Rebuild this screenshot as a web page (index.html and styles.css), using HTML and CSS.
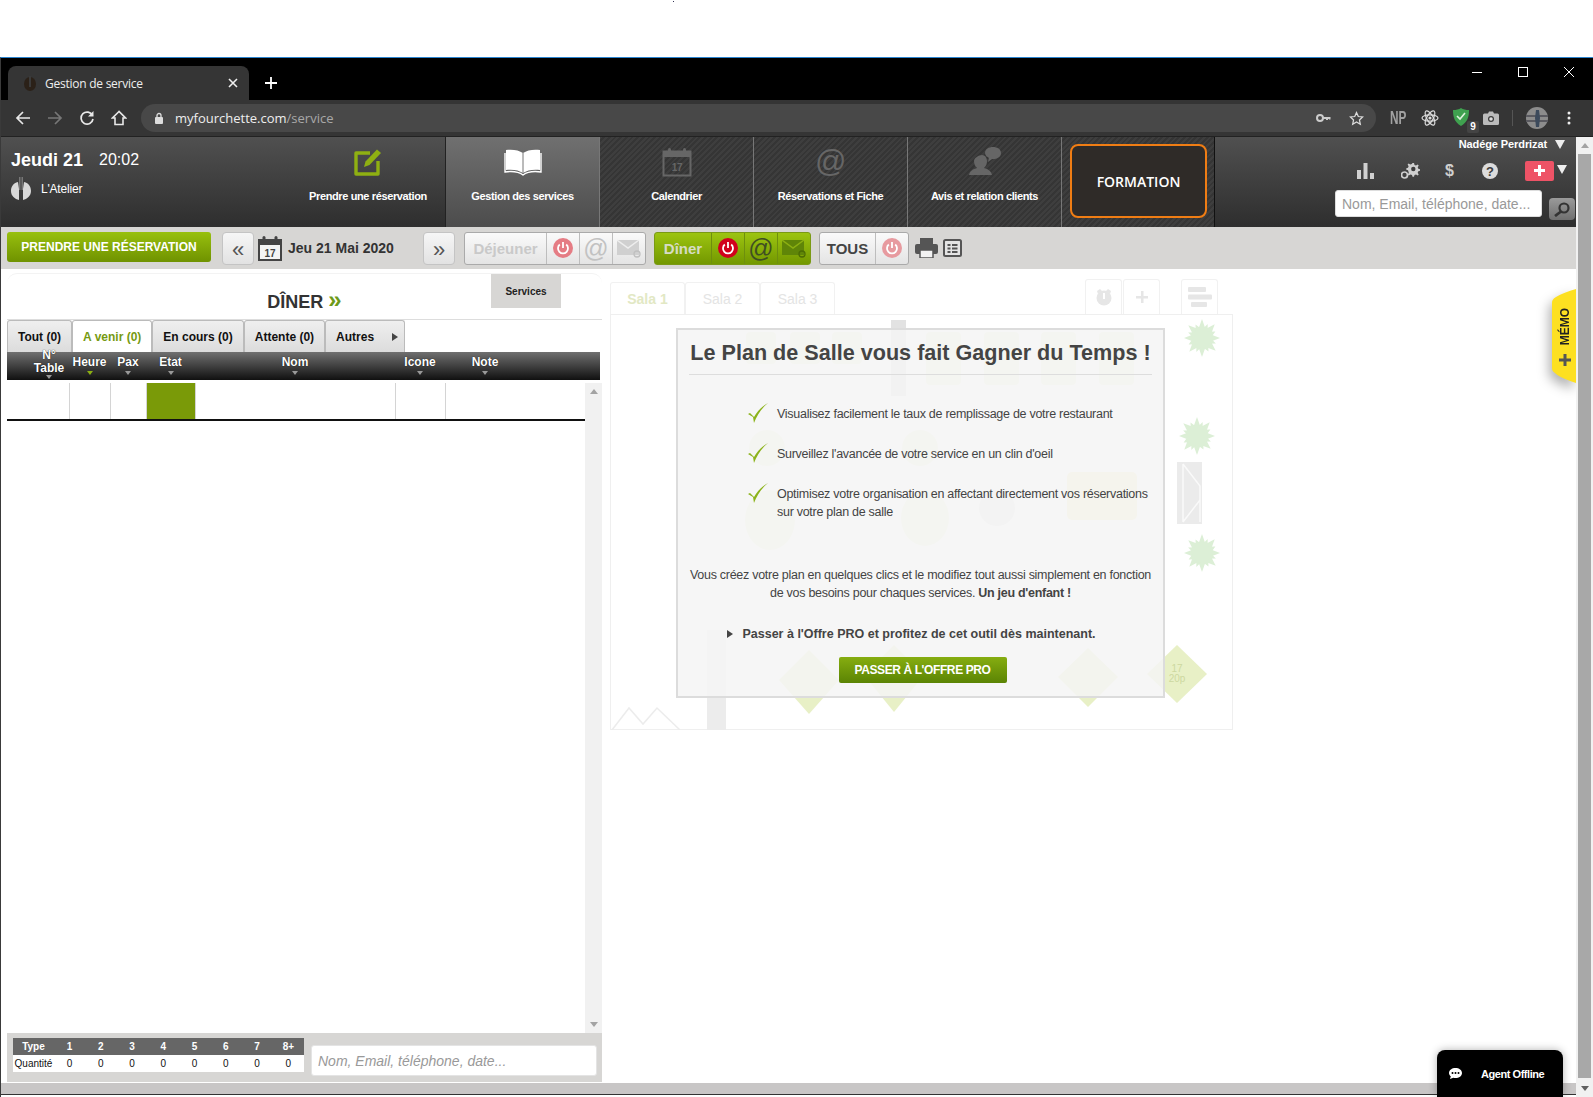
FILE: index.html
```html
<!DOCTYPE html>
<html>
<head>
  <meta charset="utf-8">
  <title>Gestion de service</title>
  <link rel="stylesheet" href="styles.css">
</head>
<body>
  <div class="top-gap"><span class="top-dot"></span></div>
  <div class="window">

    <div class="tabstrip">
      <div class="tab">
        <svg class="tab-favicon" width="16" height="16" viewBox="0 0 16 16"><ellipse cx="8" cy="9" rx="6" ry="7" fill="#2b2118"/><rect x="7" y="1" width="2" height="11" fill="#3a3a3a"/></svg>
        <span class="tab-title">Gestion de service</span>
        <svg class="tab-close" width="10" height="10" viewBox="0 0 10 10"><path d="M1 1l8 8M9 1l-8 8" stroke="#eee" stroke-width="1.6"/></svg>
      </div>
      <svg class="tab-new" width="14" height="14" viewBox="0 0 14 14"><path d="M7 1v12M1 7h12" stroke="#fff" stroke-width="1.8"/></svg>
      <div class="win-controls">
        <svg width="12" height="12" viewBox="0 0 12 12"><path d="M1 6.5h10" stroke="#fff"/></svg>
        <svg width="12" height="12" viewBox="0 0 12 12"><rect x="1.5" y="1.5" width="9" height="9" fill="none" stroke="#fff"/></svg>
        <svg width="12" height="12" viewBox="0 0 12 12"><path d="M1 1l10 10M11 1L1 11" stroke="#fff"/></svg>
      </div>
    </div>

    <div class="toolbar">
      <div class="nav-icons">
        <svg width="16" height="16" viewBox="0 0 16 16"><path d="M15 8H2M8 2L2 8l6 6" fill="none" stroke="#e8e8e8" stroke-width="1.7"/></svg>
        <svg width="16" height="16" viewBox="0 0 16 16"><path d="M1 8h13M8 2l6 6-6 6" fill="none" stroke="#777" stroke-width="1.7"/></svg>
        <svg width="16" height="16" viewBox="0 0 16 16"><path d="M13.5 5.5A6 6 0 1 0 14 9" fill="none" stroke="#e8e8e8" stroke-width="1.7"/><path d="M14.5 1v5.5H9z" fill="#e8e8e8"/></svg>
        <svg width="16" height="16" viewBox="0 0 16 16"><path d="M8 1.5L1.5 8H4v6.5h8V8h2.500z" fill="none" stroke="#e8e8e8" stroke-width="1.6"/></svg>
      </div>
      <div class="omnibox">
        <svg width="10" height="12" viewBox="0 0 10 12"><rect x="1" y="5" width="8" height="7" rx="1" fill="#ddd"/><path d="M3 5V3.500a2 2 0 0 1 4 0V5" fill="none" stroke="#ddd" stroke-width="1.300"/></svg>
        <span class="url"><span class="url-host">myfourchette.com</span>/service</span>
        <svg class="omni-key" width="15" height="10" viewBox="0 0 15 10"><circle cx="4" cy="5" r="3" fill="none" stroke="#ccc" stroke-width="2"/><path d="M7 4h7.500v2.500h-1.500V6h-1v1H10V6H7z" fill="#ccc"/></svg>
        <svg class="omni-star" width="15" height="15" viewBox="0 0 24 24"><path d="M12 2.500l2.900 6.300 6.900.8-5.100 4.700 1.400 6.800-6.100-3.500-6.100 3.500 1.400-6.800L2.300 9.600l6.900-.8z" fill="none" stroke="#ddd" stroke-width="2"/></svg>
      </div>
      <div class="extensions">
        <span class="ext-np">NP</span>
        <svg width="18" height="18" viewBox="0 0 18 18"><g fill="none" stroke="#ddd" stroke-width="1.200"><ellipse cx="9" cy="9" rx="8" ry="3.200"/><ellipse cx="9" cy="9" rx="8" ry="3.200" transform="rotate(60 9 9)"/><ellipse cx="9" cy="9" rx="8" ry="3.200" transform="rotate(120 9 9)"/></g><circle cx="9" cy="9" r="1.600" fill="#ddd"/></svg>
        <div class="ext-shield">
          <svg width="16" height="18" viewBox="0 0 16 18"><path d="M8 0c2 1.500 5 2 8 2 0 7-1.500 12-8 16C1.500 14 0 9 0 2c3 0 6-.5 8-2z" fill="#3fa14f"/><path d="M4 8l3 3 5-6" fill="none" stroke="#dff3dd" stroke-width="1.600"/></svg>
          <span class="ext-badge">9</span>
        </div>
        <svg width="16" height="14" viewBox="0 0 16 14"><path d="M1.500 2.500H5L6 .5h4l1 2h3.500A1.500 1.500 0 0 1 16 4v8.500a1.500 1.500 0 0 1-1.500 1.500h-13A1.500 1.500 0 0 1 0 12.500V4a1.500 1.500 0 0 1 1.500-1.500z" fill="#bbb"/><circle cx="8" cy="8" r="3" fill="#3a3a3a"/><circle cx="8" cy="8" r="1.800" fill="#ddd"/></svg>
        <span class="ext-sep"></span>
        <svg class="ext-avatar" width="22" height="22" viewBox="0 0 22 22"><circle cx="11" cy="11" r="11" fill="#8c8c8c"/><path d="M0 8h22v2H0zM0 13h22v2H0z" fill="#5a5a60"/><path d="M10 3h3l1 8-1 9h-3l-1-9z" fill="#3c4a5c"/></svg>
        <svg class="ext-menu" width="4" height="14" viewBox="0 0 4 14"><circle cx="2" cy="2" r="1.500" fill="#eee"/><circle cx="2" cy="7" r="1.500" fill="#eee"/><circle cx="2" cy="12" r="1.500" fill="#eee"/></svg>
      </div>
    </div>

    <div class="viewport">
      <div class="page">

        <div class="app-header">
          <div class="header-left">
            <div class="today"><b>Jeudi 21</b><span>20:02</span></div>
            <div class="resto">
              <svg width="20" height="24" viewBox="0 0 20 24"><path d="M7 5C2 6 0 10 0 14c0 5 4 8 8 9V12L7 5zM13 5c5 1 7 5 7 9 0 5-4 8-8 9V12l1-7z" fill="#d8d8d8"/><rect x="8" y="0" width="1.500" height="13" fill="#777"/><rect x="10.500" y="0" width="1.500" height="13" fill="#777"/></svg>
              <span>L'Atelier</span>
            </div>
          </div>
          <a class="nav-cell nav-plain">
            <svg width="30" height="30" viewBox="0 0 30 30"><path d="M25 14v13H3V6h14" fill="none" stroke="#8fb012" stroke-width="3.400" stroke-linejoin="round"/><path d="M11 20l1.500-5.500L24 2.500l4 3.500-11.500 12z" fill="#8fb012"/></svg>
            <span>Prendre une réservation</span>
          </a>
          <a class="nav-cell nav-active">
            <svg width="38" height="28" viewBox="0 0 38 28"><path d="M19 5C15 2 8 1 2 2v20c6-1 13 0 17 3 4-3 11-4 17-3V2c-6-1-13 0-17 3z" fill="#fff"/><path d="M19 5v20" stroke="#777" stroke-width="1"/><path d="M1 5v19c7-1 14 0 18 3 4-3 11-4 18-3V5" fill="none" stroke="#fff" stroke-width="1.400"/></svg>
            <span>Gestion des services</span>
          </a>
          <a class="nav-cell">
            <svg width="30" height="30" viewBox="0 0 30 30"><rect x="1.500" y="4.500" width="27" height="24" fill="none" stroke="#666" stroke-width="2"/><rect x="1" y="4" width="28" height="6" fill="#666"/><rect x="6" y="1" width="3" height="7" rx="1.500" fill="#666"/><rect x="21" y="1" width="3" height="7" rx="1.500" fill="#666"/><text x="15" y="24" class="cal-day">17</text></svg>
            <span>Calendrier</span>
          </a>
          <a class="nav-cell">
            <span class="at-sign">@</span>
            <span>Réservations et Fiche</span>
          </a>
          <a class="nav-cell">
            <svg width="32" height="30" viewBox="0 0 32 30"><path d="M13 8c3 0 5 3 5 6 0 3-1 5-3 7 4 1 7 3 8 7H0c1-4 4-6 8-7-2-2-3-4-3-7 0-3 5-6 8-6z" fill="#666"/><path d="M24 0c4 0 8 2 8 6s-4 6-8 6l-1 0-4 3 1-4c-2-1-4-3-4-5 0-4 4-6 8-6z" fill="#666"/></svg>
            <span>Avis et relation clients</span>
          </a>
          <div class="nav-formation"><a class="formation-btn">FORMATION</a></div>
          <div class="header-right">
            <div class="user-line"><span>Nadége Perdrizat</span><i class="tri-down"></i></div>
            <div class="tool-line">
              <svg width="18" height="16" viewBox="0 0 18 16"><rect x="0" y="7" width="4" height="9" fill="#d0d0d0"/><rect x="6.500" y="0" width="4" height="16" fill="#d0d0d0"/><rect x="13" y="10" width="4" height="6" fill="#d0d0d0"/></svg>
              <svg width="19" height="17" viewBox="0 0 19 17"><path d="M11.500 1l1.500 0 .5 2 1.500.6 1.700-1 1 1-1 1.700.6 1.500 1.700.5v1.400l-1.700.5-.6 1.500 1 1.700-1 1-1.700-1-1.500.6-.5 1.700h-1.500l-.5-1.700-1.500-.6-1.700 1-1-1 1-1.700L7 8.200 5.300 7.700V6.300L7 5.800l.6-1.500-1-1.700 1-1 1.700 1 1.500-.6z" fill="#cfcfcf"/><circle cx="12.300" cy="7" r="2.200" fill="#3d3d3d"/><circle cx="3.500" cy="13" r="3" fill="none" stroke="#cfcfcf" stroke-width="1.700"/></svg>
              <span class="dollar">$</span>
              <svg width="16" height="16" viewBox="0 0 16 16"><circle cx="8" cy="8" r="8" fill="#dcdcdc"/><text x="8" y="12.500" class="help-mark">?</text></svg>
              <span class="plus-btn"><svg width="11" height="11" viewBox="0 0 11 11"><path d="M4 0h3v4h4v3H7v4H4V7H0V4h4z" fill="#fff"/></svg></span>
              <i class="tri-down tri-plus"></i>
            </div>
            <div class="search-line">
              <input class="head-search" type="text" placeholder="Nom, Email, téléphone, date...">
              <a class="head-loupe"><svg width="16" height="15" viewBox="0 0 16 15"><circle cx="10" cy="6" r="4.500" fill="none" stroke="#333" stroke-width="2.200"/><path d="M7 9.500l-6 4.500" stroke="#333" stroke-width="2.800"/></svg></a>
            </div>
          </div>
        </div>

        <div class="subbar">
          <a class="book-btn">PRENDRE UNE RÉSERVATION</a>
          <a class="arrow-btn">«</a>
          <svg class="date-cal" width="24" height="25" viewBox="0 0 24 25"><rect x="1" y="4" width="22" height="20" fill="#f4f4f4" stroke="#444" stroke-width="2"/><rect x="0" y="4" width="24" height="5" fill="#444"/><rect x="4.500" y="0" width="3" height="7" rx="1.500" fill="#444"/><rect x="16.500" y="0" width="3" height="7" rx="1.500" fill="#444"/><text x="12" y="20.500" class="date-cal-day">17</text></svg>
          <span class="date-label">Jeu 21 Mai 2020</span>
          <a class="arrow-btn">»</a>

          <div class="seg seg-off seg-lunch">
            <span class="seg-name">Déjeuner</span>
            <span class="seg-cell"><svg class="ico-power" width="20" height="20" viewBox="0 0 20 20"><circle cx="10" cy="10" r="10" fill="#e57c84"/><path d="M6.800 6.500a5 5 0 1 0 6.400 0M10 4v6" fill="none" stroke="#fff" stroke-width="1.800"/></svg></span>
            <span class="seg-cell seg-at">@</span>
            <span class="seg-cell"><svg width="24" height="20" viewBox="0 0 24 20"><path d="M0 2h22v15H0z" fill="#d0d0d0"/><path d="M0 2l11 8 11-8" fill="none" stroke="#eee" stroke-width="1.500"/><circle cx="20" cy="16" r="3" fill="none" stroke="#c0c0c0" stroke-width="1.300"/></svg></span>
          </div>

          <div class="seg seg-on">
            <span class="seg-name">Dîner</span>
            <span class="seg-cell"><svg width="20" height="20" viewBox="0 0 20 20"><circle cx="10" cy="10" r="10" fill="#d1001c"/><path d="M6.800 6.500a5 5 0 1 0 6.400 0M10 4v6" fill="none" stroke="#fff" stroke-width="1.800"/></svg></span>
            <span class="seg-cell seg-at">@</span>
            <span class="seg-cell"><svg width="24" height="20" viewBox="0 0 24 20"><path d="M0 2h22v15H0z" fill="#5f8508"/><path d="M0 2l11 8 11-8" fill="none" stroke="#8cb012" stroke-width="1.500"/><circle cx="20" cy="16" r="3" fill="none" stroke="#4c6c04" stroke-width="1.300"/></svg></span>
          </div>

          <div class="seg seg-all">
            <span class="seg-name">TOUS</span>
            <span class="seg-cell"><svg width="20" height="20" viewBox="0 0 20 20"><circle cx="10" cy="10" r="10" fill="#e79a9f"/><path d="M6.800 6.500a5 5 0 1 0 6.400 0M10 4v6" fill="none" stroke="#fff" stroke-width="1.800"/></svg></span>
          </div>

          <svg class="ico-print" width="23" height="20" viewBox="0 0 23 20"><rect x="5" y="0" width="13" height="7" fill="#555"/><rect x="0" y="6" width="23" height="10" rx="2" fill="#555"/><rect x="5" y="12" width="13" height="8" fill="#f2f2f2" stroke="#555" stroke-width="1.500"/></svg>
          <svg class="ico-list" width="19" height="18" viewBox="0 0 19 18"><rect x="1" y="1" width="17" height="16" rx="1.500" fill="#e4e4e4" stroke="#555" stroke-width="2"/><path d="M4.500 5h3v2h-3zM4.500 8.500h3v2h-3zM4.500 12h3v2h-3zM9 5h5.500v2H9zM9 8.500h5.500v2H9zM9 12h5.500v2H9z" fill="#555"/></svg>
        </div>

        <div class="content">
          <section class="left-panel">
            <div class="panel-title">
              <span></span>
              <h2>DÎNER <em>»</em></h2>
              <a class="services-btn">Services</a>
            </div>
            <div class="list-tabs">
              <a class="list-tab">Tout (0)</a>
              <a class="list-tab is-current">A venir (0)</a>
              <a class="list-tab">En cours (0)</a>
              <a class="list-tab">Attente (0)</a>
              <a class="list-tab tab-more">Autres <i class="tri-right"></i></a>
            </div>
            <div class="list-head">
              <div class="col col-table">N°<br>Table<i></i></div>
              <div class="col">Heure<i class="sorted"></i></div>
              <div class="col">Pax<i></i></div>
              <div class="col">Etat<i></i></div>
              <div class="col">Nom<i></i></div>
              <div class="col">Icone<i></i></div>
              <div class="col">Note<i></i></div>
            </div>
            <div class="list-body">
              <div class="list-rows">
                <div class="list-row">
                  <div class="cell"></div>
                  <div class="cell"></div>
                  <div class="cell"></div>
                  <div class="cell cell-state"></div>
                  <div class="cell"></div>
                  <div class="cell"></div>
                  <div class="cell cell-last"></div>
                </div>
              </div>
              <div class="list-scroll"><i class="sb-up"></i><i class="sb-down"></i></div>
            </div>
            <div class="list-foot">
              <table class="qty">
                <tr><th class="qty-type">Type</th><th>1</th><th>2</th><th>3</th><th>4</th><th>5</th><th>6</th><th>7</th><th>8+</th></tr>
                <tr><td class="qty-type">Quantité</td><td>0</td><td>0</td><td>0</td><td>0</td><td>0</td><td>0</td><td>0</td><td>0</td></tr>
              </table>
              <input class="foot-search" type="text" placeholder="Nom, Email, téléphone, date...">
            </div>
          </section>

          <section class="plan-panel">
            <div class="plan-tabs">
              <a class="plan-tab plan-tab-on">Sala 1</a>
              <a class="plan-tab">Sala 2</a>
              <a class="plan-tab">Sala 3</a>
              <div class="plan-tools">
                <a class="plan-tool"><svg width="16" height="18" viewBox="0 0 16 18"><circle cx="8" cy="10" r="7.500" fill="#e6e6e6"/><path d="M1 3l3-2 2 2-4 3zM15 3l-3-2-2 2 4 3z" fill="#e6e6e6"/><path d="M8 5v6" stroke="#fff" stroke-width="2"/></svg></a>
                <a class="plan-tool"><svg width="12" height="12" viewBox="0 0 12 12"><path d="M5 0h2.500v5H12v2.500H7.500V12H5V7.500H0V5h5z" fill="#e6e6e6"/></svg></a>
                <a class="plan-tool plan-tool-far"><svg width="24" height="20" viewBox="0 0 24 20"><rect x="0" y="0" width="18" height="5" rx="1" fill="#e6e6e6"/><rect x="0" y="7.500" width="24" height="5" rx="1" fill="#e6e6e6"/><rect x="3" y="15" width="16" height="5" rx="1" fill="#e6e6e6"/></svg></a>
              </div>
            </div>
            <div class="plan-frame">
              <svg class="floor" width="623" height="416" viewBox="610 314 623 416">
                <defs>
                  <g id="plant">
                    <polygon points="0,-19 3.500,-9 12.700,-13.700 9,-3.600 18,0 9,3.600 13.700,12.700 3.600,9 0,19 -3.600,9 -12.700,13.700 -9,3.600 -18,0 -9,-3.600 -13.700,-12.700 -3.600,-9"/>
                    <polygon transform="rotate(22)" points="0,-15 3,-8 10,-11 8,-3 15,0 8,3 11,10 3,8 0,15 -3,8 -10,11 -8,3 -15,0 -8,-3 -11,-10 -3,-8"/>
                  </g>
                </defs>
                <g class="fl-table">
                  <rect x="746" y="332" width="30" height="32" rx="4"/><rect x="790" y="332" width="30" height="32" rx="4"/><rect x="832" y="332" width="30" height="32" rx="4"/>
                  <rect x="926" y="332" width="35" height="53" rx="4"/><rect x="984" y="332" width="35" height="53" rx="4"/><rect x="1041" y="332" width="35" height="53" rx="4"/><rect x="1099" y="332" width="35" height="53" rx="4"/>
                  <circle cx="767" cy="448" r="18"/><circle cx="920" cy="448" r="18"/>
                  <ellipse cx="770" cy="520" rx="25" ry="30"/><ellipse cx="925" cy="518" rx="24" ry="28"/>
                </g>
                <rect x="891" y="320" width="15" height="76" fill="#e2e2e2"/>
                <rect x="707" y="630" width="19" height="100" fill="#ececec"/>
                <circle cx="997" cy="508" r="18" fill="#e8e8e8"/>
                <rect x="1067" y="472" width="70" height="48" rx="5" fill="#f9efc0"/>
                <g class="fl-diamond">
                  <polygon points="809,650 839,680 809,714 779,680"/>
                  <polygon points="894,645 924,675 894,712 864,675"/>
                  <polygon points="1088,648 1118,677 1088,707 1058,677"/>
                  <polygon points="1177,645 1207,674 1177,703 1147,674"/>
                </g>
                <text x="1177" y="672" class="fl-text">17</text>
                <text x="1177" y="682" class="fl-text">20p</text>
                <g class="fl-plant">
                  <use href="#plant" x="1202" y="338"/>
                  <use href="#plant" x="1197" y="436"/>
                  <use href="#plant" x="1202" y="553"/>
                </g>
                <g class="fl-door">
                  <path d="M1177 462h25v62h-25z" fill="#ebebeb"/>
                  <path d="M1183 464l17 22v36M1183 522l17-22M1183 464v58" fill="none" stroke="#fafafa" stroke-width="1.500"/>
                </g>
                <path d="M612 730l17-22 14 16 14-16 23 22" fill="none" stroke="#ececec" stroke-width="1.500"/>
              </svg>

              <div class="promo">
                <h3>Le Plan de Salle vous fait Gagner du Temps !</h3>
                <ul class="promo-list">
                  <li><svg width="20" height="20" viewBox="0 0 20 20"><path d="M0 11l5 3 1 6C9 12 14 5 20 0 13 4 9 9 6 14L2 10z" fill="#8cb31b"/></svg><span>Visualisez facilement le taux de remplissage de votre restaurant</span></li>
                  <li><svg width="20" height="20" viewBox="0 0 20 20"><path d="M0 11l5 3 1 6C9 12 14 5 20 0 13 4 9 9 6 14L2 10z" fill="#8cb31b"/></svg><span>Surveillez l'avancée de votre service en un clin d'oeil</span></li>
                  <li><svg width="20" height="20" viewBox="0 0 20 20"><path d="M0 11l5 3 1 6C9 12 14 5 20 0 13 4 9 9 6 14L2 10z" fill="#8cb31b"/></svg><span>Optimisez votre organisation en affectant directement vos réservations sur votre plan de salle</span></li>
                </ul>
                <p class="promo-text">Vous créez votre plan en quelques clics et le modifiez tout aussi simplement en fonction de vos besoins pour chaques services. <b>Un jeu d'enfant !</b></p>
                <p class="promo-offer"><i class="tri-right"></i>Passer à l'Offre PRO et profitez de cet outil dès maintenant.</p>
                <a class="promo-btn">PASSER À L'OFFRE PRO</a>
              </div>
            </div>
          </section>

          <a class="memo-tab">
            <svg class="memo-shape" width="24" height="94" viewBox="0 0 24 94"><path d="M24 0v94C14 91 6 87 3 84 1 83 0 81 0 79V14c0-3 1-4 4-6 5-3 12-6 20-8z" fill="#fde021"/></svg>
            <span class="memo-label">MÉMO</span>
            <svg class="memo-plus" width="12" height="12" viewBox="0 0 12 12"><path d="M4.500 0h3v4.500H12v3H7.500V12h-3V7.500H0v-3h4.500z" fill="#555"/></svg>
          </a>
        </div>

        <div class="hscroll"></div>
      </div>

      <div class="vscroll"><i class="sb-up"></i><div class="vthumb"></div><i class="sb-down"></i></div>

      <div class="chat-badge">
        <svg width="13" height="11" viewBox="0 0 13 11"><path d="M6.500 0C10 0 13 2 13 5s-3 5-6.500 5c-.8 0-1.500-.1-2.200-.3L1 11l.8-2.700C.7 7.500 0 6.300 0 5c0-3 3-5 6.500-5z" fill="#fff"/><circle cx="3.500" cy="5" r="1" fill="#000"/><circle cx="6.500" cy="5" r="1" fill="#000"/><circle cx="9.500" cy="5" r="1" fill="#000"/></svg>
        <span>Agent Offline</span>
      </div>
    </div>
  </div>
</body>
</html>
```

FILE: styles.css
```css
* {
  box-sizing: border-box;
}

html, body {
  margin: 0;
  padding: 0;
  width: 1593px;
  height: 1097px;
  overflow: hidden;
  background-color: #fff;
  font-family: "Liberation Sans", Arial, sans-serif;
}

a {
  cursor: pointer;
}

.top-gap {
  height: 57px;
  position: relative;
}

.top-dot {
  position: absolute;
  left: 673px;
  top: 1px;
  width: 1px;
  height: 1px;
  background-color: #335;
}

.window {
  height: 1040px;
  border-top: 1px solid #2b84cf;
  border-left: 1px solid #3a3a3a;
  display: flex;
  flex-direction: column;
}

/* browser chrome */
.tabstrip {
  height: 42px;
  background-color: #000;
  display: flex;
  align-items: flex-end;
  padding-left: 7px;
  position: relative;
}

.tab {
  width: 241px;
  height: 34px;
  background-color: #353535;
  border-radius: 8px 8px 0 0;
  display: flex;
  align-items: center;
  padding: 0 11px 0 14px;
  color: #eee;
  font-family: "Open Sans", sans-serif;
  font-size: 12px;
  letter-spacing: -0.25px;
}

.tab-favicon {
  margin-right: 7px;
}

.tab-title {
  flex: 1;
}

.tab-new {
  margin: 0 0 10px 15px;
}

.win-controls {
  margin-left: auto;
  margin-right: 18px;
  display: flex;
  gap: 34px;
  padding-top: 8px;
  align-self: flex-start;
}

.toolbar {
  height: 37px;
  background-color: #353535;
  border-bottom: 1px solid #222;
  display: flex;
  align-items: center;
  padding-left: 14px;
}

.nav-icons {
  width: 126px;
  display: flex;
  gap: 16px;
}

.omnibox {
  width: 1235px;
  height: 28px;
  background-color: #484848;
  border-radius: 14px;
  display: flex;
  align-items: center;
  padding: 0 12px 0 13px;
  color: #a8a8a8;
  font-family: "Open Sans", sans-serif;
  font-size: 13px;
}

.url {
  margin-left: 11px;
  flex: 1;
}

.url-host {
  color: #eee;
}

.omni-key {
  margin-right: 1px;
}

.omni-star {
  margin-left: 17px;
}

.extensions {
  display: flex;
  align-items: center;
  margin-left: 14px;
  width: 202px;
  gap: 11px;
}

.ext-np {
  width: 18px;
  color: #a2a2a2;
  font-family: "Liberation Sans", sans-serif;
  font-size: 19px;
  font-weight: bold;
  transform: scaleX(0.62);
  transform-origin: left center;
  margin-right: 2px;
}

.ext-shield {
  position: relative;
  width: 19px;
  height: 20px;
  margin-left: 3px;
}

.ext-badge {
  position: absolute;
  right: -7px;
  bottom: -5px;
  width: 12px;
  height: 12px;
  background-color: #444;
  border-radius: 2px;
  color: #fff;
  font-size: 10px;
  font-weight: bold;
  line-height: 12px;
  text-align: center;
}

.ext-sep {
  width: 1px;
  height: 16px;
  margin-left: 2px;
  background-color: #555;
}

.ext-avatar {
  margin-left: 2px;
}

.ext-menu {
  margin-left: 8px;
}

.viewport {
  flex: 1;
  display: flex;
  position: relative;
  min-height: 0;
}

.page {
  width: 1575px;
  display: flex;
  flex-direction: column;
}

/* app header */
.app-header {
  height: 90px;
  background: linear-gradient(#505050, #2e2e2e);
  display: flex;
  color: #fff;
}

.header-left {
  width: 290px;
  padding: 13px 0 0 10px;
}

.today {
  font-size: 16px;
  display: flex;
  gap: 16px;
  line-height: 20px;
}

.today b {
  font-size: 18px;
}

.resto {
  display: flex;
  align-items: center;
  gap: 10px;
  margin-top: 7px;
  font-size: 12px;
  letter-spacing: -0.2px;
}

.nav-cell {
  width: 154px;
  display: flex;
  flex-direction: column;
  align-items: center;
  color: #fff;
  font-size: 11px;
  font-weight: bold;
  letter-spacing: -0.38px;
  padding-top: 10px;
  position: relative;
  border-left: 1px solid #777;
  background: repeating-linear-gradient(135deg, #3e3e3e 0 2px, #353535 2px 4px);
}

.nav-cell span:last-child {
  position: absolute;
  top: 53px;
  left: 0;
  right: 0;
  text-align: center;
}

.nav-cell > svg {
  height: 30px;
}

.nav-plain {
  border-left: none;
  background: none;
}

.nav-active {
  border-left: 1px solid #222;
  background: linear-gradient(#707070, #4c4c4c);
}

.at-sign {
  font-size: 31px;
  line-height: 30px;
  color: #666;
  font-weight: normal;
}

.cal-day {
  font-size: 10px;
  font-weight: bold;
  fill: #666;
  text-anchor: middle;
}

.nav-formation {
  width: 154px;
  border-left: 1px solid #777;
  border-right: 1px solid #111;
  background: repeating-linear-gradient(135deg, #3e3e3e 0 2px, #353535 2px 4px);
  padding: 7px 7px 9px 8px;
}

.formation-btn {
  display: flex;
  align-items: center;
  justify-content: center;
  height: 100%;
  background-color: #2f2b28;
  border: 2px solid #f07d14;
  border-radius: 8px;
  color: #fff;
  font-family: "Open Sans", sans-serif;
  font-size: 14px;
  font-weight: 600;
}

.header-right {
  flex: 1;
  display: flex;
  flex-direction: column;
  align-items: flex-end;
  position: relative;
}

.user-line {
  display: flex;
  align-items: center;
  gap: 8px;
  height: 14px;
  padding-right: 11px;
  font-size: 11px;
  font-weight: bold;
  letter-spacing: -0.1px;
}

.tri-down {
  display: block;
  width: 0;
  height: 0;
  border-left: 5px solid transparent;
  border-right: 5px solid transparent;
  border-top: 9px solid #eee;
}

.tool-line {
  display: flex;
  align-items: center;
  height: 23px;
  margin-top: 8px;
  padding-right: 9px;
}

.tool-line > svg:nth-child(2) {
  margin-left: 26px;
}

.dollar {
  margin-left: 25px;
  color: #cfcfcf;
  font-size: 16px;
  font-weight: bold;
}

.tool-line > svg:nth-child(4) {
  margin-left: 28px;
}

.help-mark {
  font-size: 13px;
  font-weight: bold;
  fill: #3d3d3d;
  text-anchor: middle;
}

.plus-btn {
  margin-left: 27px;
  width: 29px;
  height: 20px;
  background-color: #ee5366;
  border-radius: 2px;
  display: flex;
  align-items: center;
  justify-content: center;
}

.tri-plus {
  margin: 0 0 2px 3px;
}

.search-line {
  display: flex;
  align-items: flex-start;
  margin-top: 8px;
}

.head-search {
  width: 207px;
  height: 27px;
  border: 1px solid #ddd;
  border-radius: 3px;
  padding: 0 6px;
  font-family: "Liberation Sans", sans-serif;
  font-size: 14px;
  background-color: #fff;
}

.head-search::placeholder {
  color: #999;
}

.head-loupe {
  width: 26px;
  height: 22px;
  margin: 8px 1px 0 7px;
  border-radius: 4px;
  background: linear-gradient(#9a9a9a, #6f6f6f);
  display: flex;
  align-items: center;
  justify-content: center;
}

/* date and service bar */
.subbar {
  height: 42px;
  background-color: #d7d6d4;
  display: flex;
  align-items: center;
  padding-left: 6px;
}

.book-btn {
  width: 204px;
  height: 30px;
  margin: -2px 11px 0 0;
  border-radius: 3px;
  background: linear-gradient(#98c00e, #6f9200);
  color: #fff;
  font-size: 12px;
  font-weight: bold;
  line-height: 30px;
  text-align: center;
}

.arrow-btn {
  width: 32px;
  height: 33px;
  border: 1px solid #c4c4c4;
  border-radius: 4px;
  background: linear-gradient(#f6f6f6, #e2e2e2);
  color: #555;
  font-size: 22px;
  line-height: 33px;
  text-align: center;
}

.date-cal {
  margin-left: 4px;
}

.date-cal-day {
  font-size: 10px;
  font-weight: bold;
  fill: #444;
  text-anchor: middle;
}

.date-label {
  width: 135px;
  margin-left: 6px;
  color: #333;
  font-size: 14px;
  font-weight: bold;
}

.seg {
  height: 33px;
  margin-left: 8px;
  display: flex;
  border: 1px solid #aaa;
  border-radius: 3px;
  background: linear-gradient(#fafafa, #e4e4e4);
}

.seg-lunch {
  margin-left: 9px;
}

.seg-name {
  display: flex;
  align-items: center;
  justify-content: center;
  font-size: 15px;
  font-weight: bold;
}

.seg-cell {
  width: 33px;
  display: flex;
  align-items: center;
  justify-content: center;
  border-left: 1px solid #bdbdbd;
}

.seg-at {
  font-size: 25px;
  line-height: 28px;
}

.seg-off .seg-name {
  width: 81px;
  color: #c9c9c9;
}

.seg-off .seg-at {
  color: #c2c2c2;
}

.seg-on {
  border-color: #7a9a14;
  background: linear-gradient(#9cc411, #739800);
}

.seg-on .seg-name {
  width: 56px;
  color: #d6dcc4;
}

.seg-on .seg-cell {
  border-left-color: #6e8f0e;
}

.seg-on .seg-at {
  color: #3f4f22;
}

.seg-all .seg-name {
  width: 55px;
  color: #444;
  font-size: 15px;
}

.ico-print {
  margin-left: 6px;
}

.ico-list {
  margin-left: 5px;
}

/* content */
.content {
  height: 814px;
  display: flex;
  position: relative;
}

.left-panel {
  width: 595px;
  margin-left: 6px;
  display: flex;
  flex-direction: column;
}

.panel-title {
  height: 47px;
  display: grid;
  grid-template-columns: 1fr auto 1fr;
  border-top: 1px solid #f3f3f3;
  margin-top: 4px;
  border-radius: 10px 10px 0 0;
  border-bottom: 1px solid #ddd;
}

.panel-title h2 {
  margin: 17px 0 0;
  color: #333;
  font-size: 18px;
  font-weight: bold;
}

.panel-title em {
  color: #6d9a1a;
  font-style: normal;
  font-size: 24px;
  line-height: 18px;
}

.services-btn {
  justify-self: end;
  width: 70px;
  height: 34px;
  margin-right: 41px;
  background-color: #d7d6d4;
  color: #222;
  font-size: 10px;
  font-weight: bold;
  line-height: 36px;
  text-align: center;
}

.list-tabs {
  height: 32px;
  display: flex;
}

.list-tab {
  height: 32px;
  padding: 0 10px;
  display: flex;
  align-items: center;
  border: 1px solid #bbb;
  border-bottom: none;
  border-radius: 3px 3px 0 0;
  background: linear-gradient(#efefef, #dcdcdc);
  color: #111;
  font-size: 12px;
  font-weight: bold;
}

.is-current {
  background: #fff;
  color: #769a12;
}

.tab-more {
  width: 80px;
  justify-content: space-between;
  padding-right: 6px;
}

.tri-right {
  display: inline-block;
  width: 0;
  height: 0;
  border-top: 4px solid transparent;
  border-bottom: 4px solid transparent;
  border-left: 6px solid #444;
}

.list-head {
  height: 28px;
  margin-right: 2px;
  display: grid;
  grid-template-columns: 62px 41px 36px 49px 200px 50px 80px 1fr;
  background: linear-gradient(#707070, #101010);
  color: #fff;
  font-size: 12px;
  font-weight: bold;
  text-shadow: 0 0 1px #000;
}

.col {
  text-align: center;
  padding-top: 3px;
  line-height: 14px;
  position: relative;
}

.col i {
  position: absolute;
  left: 50%;
  top: 19px;
  margin-left: -3px;
  border-left: 3px solid transparent;
  border-right: 3px solid transparent;
  border-top: 4px solid #999;
}

.col i.sorted {
  border-top-color: #8cb012;
}

.col-table {
  padding: 0 0 0 22px;
  margin-top: -3px;
  line-height: 13px;
  white-space: nowrap;
}

.col-table i {
  left: calc(50% + 11px);
  top: 26px;
}

.list-body {
  flex: 1;
  display: flex;
  margin-top: 3px;
  min-height: 0;
}

.list-rows {
  width: 578px;
}

.list-row {
  height: 38px;
  display: grid;
  grid-template-columns: 63px 41px 36px 49px 200px 50px 1fr;
  border-bottom: 2px solid #111;
}

.cell {
  border-right: 1px solid #d4d4d4;
}

.cell-state {
  background-color: #7a9a08;
}

.cell-last {
  border-right: none;
}

.list-scroll {
  width: 17px;
  background-color: #f1f1f1;
  position: relative;
}

.sb-up, .sb-down {
  position: absolute;
  left: 50%;
  margin-left: -4px;
  border-left: 4px solid transparent;
  border-right: 4px solid transparent;
}

.sb-up {
  top: 6px;
  border-bottom: 5px solid #a3a3a3;
}

.sb-down {
  bottom: 6px;
  border-top: 5px solid #606060;
}

.list-scroll .sb-down {
  border-top-color: #a3a3a3;
}

.list-foot {
  height: 49px;
  background-color: #d7d6d4;
  display: flex;
  align-items: flex-start;
  padding: 5px 4px 0 6px;
  margin-bottom: 1px;
}

.qty {
  width: 291px;
  height: 34px;
  border-collapse: collapse;
  table-layout: fixed;
  background-color: #fff;
  font-size: 10px;
  text-align: center;
}

.qty th {
  background-color: #666;
  color: #fff;
  font-size: 10px;
  height: 17px;
  padding: 0;
}

.qty td {
  padding: 0;
  color: #111;
}

.qty .qty-type {
  width: 41px;
}

.foot-search {
  width: 286px;
  height: 31px;
  margin: 7px 0 0 7px;
  border: 1px solid #e4e4e4;
  border-radius: 3px;
  padding: 0 6px;
  font-family: "Liberation Sans", sans-serif;
  font-size: 14px;
  font-style: italic;
  background-color: #fff;
}

.foot-search::placeholder {
  color: #999;
}

/* floor plan */
.plan-panel {
  width: 623px;
  margin-left: 8px;
  padding-top: 10px;
  flex-shrink: 0;
}

.plan-tabs {
  height: 35px;
  display: flex;
  align-items: flex-end;
}

.plan-tab {
  width: 75px;
  height: 32px;
  border: 1px solid #f1f1f1;
  border-bottom: none;
  border-radius: 3px 3px 0 0;
  color: #e4e4e4;
  font-size: 14px;
  line-height: 32px;
  text-align: center;
}

.plan-tab-on {
  color: #e2e8c4;
  font-weight: bold;
}

.plan-tools {
  margin-left: auto;
  display: flex;
  gap: 1px;
  padding-right: 15px;
}

.plan-tool {
  width: 37px;
  height: 35px;
  border: 1px solid #f1f1f1;
  border-bottom: none;
  border-radius: 3px 3px 0 0;
  display: flex;
  align-items: center;
  justify-content: center;
}

.plan-tool-far {
  margin-left: 20px;
}

.plan-frame {
  width: 623px;
  height: 416px;
  border: 1px solid #efefef;
  position: relative;
}

.floor {
  position: absolute;
  left: -1px;
  top: -1px;
}

.fl-table {
  fill: #f1f5dc;
}

.fl-diamond {
  fill: #e8f0c6;
}

.fl-plant {
  fill: #dcefd6;
}

.fl-text {
  font-size: 10px;
  fill: #cdd8a0;
  text-anchor: middle;
}

.promo {
  position: absolute;
  left: 65px;
  top: 13px;
  width: 489px;
  height: 370px;
  padding: 0 11px;
  background-color: rgba(245, 245, 245, 0.86);
  border: 2px solid #dcdcdc;
  color: #444;
  display: flex;
  flex-direction: column;
  align-items: center;
}

.promo h3 {
  width: 100%;
  margin: 0;
  height: 45px;
  border-bottom: 1px solid #ddd;
  color: #444;
  font-size: 21.6px;
  font-weight: bold;
  line-height: 46px;
  text-align: center;
  white-space: nowrap;
}

.promo-list {
  list-style: none;
  width: 100%;
  margin: 0;
  padding: 30px 0 0 59px;
}

.promo-list li {
  display: flex;
  align-items: flex-start;
  gap: 9px;
  font-size: 12.5px;
  letter-spacing: -0.28px;
  line-height: 18px;
  margin-bottom: 22px;
}

.promo-list svg {
  flex-shrink: 0;
  margin-top: -2px;
}

.promo-text {
  width: 100%;
  margin: 23px 0 0;
  font-size: 12.5px;
  letter-spacing: -0.28px;
  line-height: 18px;
  text-align: center;
}

.promo-offer {
  margin: 23px 0 0 -16px;
  padding-right: 2px;
  font-size: 12.5px;
  font-weight: bold;
  line-height: 18px;
}

.promo-offer .tri-right {
  margin-right: 9px;
}

.promo-btn {
  width: 168px;
  height: 26px;
  margin: 14px 0 0 4px;
  border-radius: 2px;
  background: linear-gradient(#86ad10, #5b8404);
  color: #fff;
  font-size: 12px;
  font-weight: bold;
  letter-spacing: -0.4px;
  line-height: 26px;
  text-align: center;
}

/* memo tab, over the page edge */
.memo-tab {
  position: absolute;
  right: 0;
  top: 20px;
  width: 24px;
  height: 94px;
  filter: drop-shadow(-3px 6px 6px rgba(0, 0, 0, 0.3));
}

.memo-shape {
  display: block;
}

.memo-label {
  position: absolute;
  left: 6px;
  top: 19px;
  writing-mode: vertical-rl;
  transform: rotate(180deg);
  color: #222;
  font-size: 12px;
  font-weight: bold;
}

.memo-plus {
  position: absolute;
  left: 7px;
  top: 65px;
}

.hscroll {
  height: 12px;
  background-color: #c8c6c6;
  border-bottom: 1px solid #333;
}

.vscroll {
  width: 17px;
  background-color: #f1f1f1;
  position: relative;
}

.vthumb {
  position: absolute;
  left: 2px;
  right: 2px;
  top: 17px;
  bottom: 19px;
  background-color: #a8a8a8;
}

.chat-badge {
  position: absolute;
  left: 1436px;
  bottom: 0;
  width: 126px;
  height: 47px;
  background-color: #000;
  border-radius: 8px 8px 0 0;
  box-shadow: 0 0 8px rgba(0, 0, 0, 0.3);
  display: flex;
  align-items: center;
  padding-left: 12px;
  color: #fff;
  font-size: 11px;
  font-weight: bold;
  letter-spacing: -0.45px;
}

.chat-badge span {
  margin-left: 19px;
}
```
